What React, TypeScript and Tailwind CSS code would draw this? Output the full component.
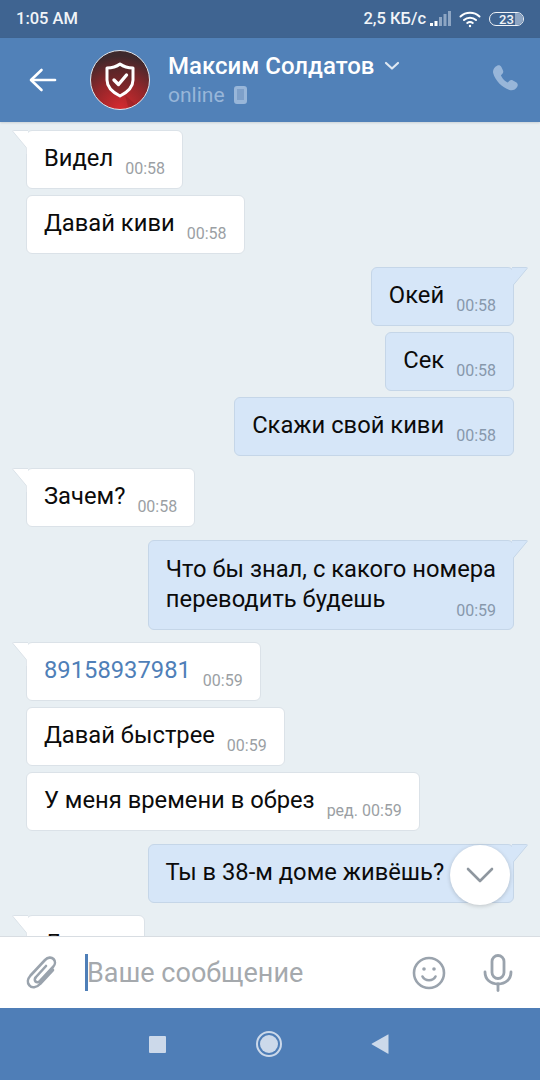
import React from 'react';

interface Message {
  text: string[];
  time: string;
  out?: boolean;
  tail?: boolean;
  link?: boolean;
  groupStart?: boolean;
}

const MESSAGES: Message[] = [
  { text: ['Видел'], time: '00:58', tail: true },
  { text: ['Давай киви'], time: '00:58' },
  { text: ['Окей'], time: '00:58', out: true, tail: true, groupStart: true },
  { text: ['Сек'], time: '00:58', out: true },
  { text: ['Скажи свой киви'], time: '00:58', out: true },
  { text: ['Зачем?'], time: '00:58', tail: true, groupStart: true },
  { text: ['Что бы знал, с какого номера', 'переводить будешь'], time: '00:59', out: true, tail: true, groupStart: true },
  { text: ['89158937981'], time: '00:59', tail: true, link: true, groupStart: true },
  { text: ['Давай быстрее'], time: '00:59' },
  { text: ['У меня времени в обрез'], time: 'ред. 00:59' },
  { text: ['Ты в 38-м доме живёшь?'], time: '00:59', out: true, tail: true, groupStart: true },
  { text: ['Да'], time: '00:59', tail: true, groupStart: true },
];

const Bubble: React.FC<{ message: Message }> = ({ message }) => {
  const { text, time, out, tail, link, groupStart } = message;
  const multiline = text.length > 1;

  return (
    <div className={`flex shrink-0 ${out ? 'justify-end pr-[26px]' : 'justify-start pl-[26px]'} ${groupStart ? 'mt-[12.5px]' : 'mt-[6px]'}`}>
      <div
        className={`relative flex min-h-[59px] rounded-[6px] border pl-[17px] pr-[17px] ${
          out ? 'border-[#c5d6e8] bg-[#d6e6f8]' : 'border-[#dbe2e8] bg-white'
        } ${multiline ? 'flex-col pt-[13px]' : 'items-start gap-[12px] pt-[12px]'}`}
      >
        {tail && !out && (
          <svg className="absolute left-[-15px] top-[-1px]" width="16" height="24" viewBox="0 0 16 24">
            <path d="M16 0.5H1.5Q0.2 0.5 1 1.6L15.5 19V24H16Z" fill="#ffffff" stroke="#dbe2e8" strokeWidth="1" />
            <rect x="14.8" y="1" width="2" height="23" fill="#ffffff" />
          </svg>
        )}
        {tail && out && (
          <svg className="absolute right-[-15px] top-[-1px]" width="16" height="24" viewBox="0 0 16 24">
            <path d="M0 0.5H14.5Q15.8 0.5 15 1.6L0.5 19V24H0Z" fill="#d6e6f8" stroke="#c5d6e8" strokeWidth="1" />
            <rect x="-1" y="1" width="2" height="23" fill="#d6e6f8" />
          </svg>
        )}
        <div className={`text-[23.75px] leading-[30px] ${link ? 'text-[#4f7fb8]' : 'text-[#0b0b0b]'}`}>
          {text.map((line) => (
            <div key={line} className="whitespace-nowrap">{line}</div>
          ))}
        </div>
        <div
          className={`whitespace-nowrap text-[16px] leading-[20px] ${out ? 'text-[#8798ac]' : 'text-[#9b9fa4]'} ${
            multiline ? 'self-end -mt-[13px] mb-[8px]' : 'mt-[16px]'
          }`}
        >
          {time}
        </div>
      </div>
    </div>
  );
};

export default function App() {
  return (
    <div className="flex h-[1080px] w-[540px] flex-col overflow-hidden bg-[#e8eff3] font-['Roboto',sans-serif]">
      {/* Status bar */}
      <div className="flex h-[38px] shrink-0 items-center bg-[#3f6491] pl-[16px] pr-[16px] text-[16.5px] font-medium text-[#f1f4f8]">
        <span>1:05 AM</span>
        <span className="ml-auto">2,5 КБ/с</span>
        <svg className="ml-[4px]" width="21" height="18" viewBox="0 0 21 18">
          <rect x="0" y="13" width="3" height="3" fill="#ffffff" />
          <rect x="4.5" y="11" width="3" height="5" fill="#ffffff" />
          <rect x="9" y="7" width="3" height="9" fill="#8ea6c4" />
          <rect x="13.5" y="4" width="3" height="12" fill="#8ea6c4" />
          <rect x="18" y="1" width="3" height="15" fill="#8ea6c4" />
        </svg>
        <svg className="ml-[8px]" width="22" height="18" viewBox="0 0 22 18" fill="none" stroke="#ffffff" strokeWidth="2" strokeLinecap="round">
          <path d="M1.5 6.5C6.8 1.5 15.2 1.5 20.5 6.5" />
          <path d="M5 10C8.3 7 13.7 7 17 10" />
          <path d="M8.2 13C9.8 11.8 12.2 11.8 13.8 13" />
          <circle cx="11" cy="16" r="1.2" fill="#ffffff" stroke="none" />
        </svg>
        <div className="relative ml-[8px] flex h-[14px] w-[35px] items-center justify-center overflow-hidden rounded-[8px] border border-[#f1f4f8] text-[13px] leading-none">
          <div className="absolute bottom-0 right-0 top-0 w-[8px] bg-[#8ea6c4]" />
          <span className="relative">23</span>
        </div>
      </div>

      {/* Header */}
      <div className="flex h-[84px] shrink-0 items-center bg-[#5181b8] shadow-[0_1px_2px_rgba(0,0,0,0.12)]">
        <svg className="ml-[29px]" width="28" height="24" viewBox="0 0 28 24" fill="none" stroke="#ffffff" strokeWidth="2.6" strokeLinecap="round" strokeLinejoin="round">
          <path d="M12.5 2L2 12L12.5 22" />
          <path d="M2.5 12H26" />
        </svg>
        <div className="ml-[33px] h-[60px] w-[60px] shrink-0 overflow-hidden rounded-full border-[1.5px] border-[#dfe3e8] bg-[radial-gradient(circle_at_50%_100%,#d62b2f_0%,#96262a_42%,#3e292c_82%)]">
          <svg width="57" height="57" viewBox="0 0 57 57">
            <path d="M34 44L52 60H38Z" fill="#000000" fillOpacity="0.1" />
            <path d="M29 13C33 16 37 17 42 17V29C42 37 36 41.5 29 45C22 41.5 16 37 16 29V17C21 17 25 16 29 13Z" fill="#3a2426" fillOpacity="0.35" stroke="#ffffff" strokeWidth="3" strokeLinejoin="round" />
            <path d="M23 29L27.5 33.5L35.5 24" fill="none" stroke="#ffffff" strokeWidth="3.4" strokeLinecap="round" strokeLinejoin="round" />
          </svg>
        </div>
        <div className="ml-[18px] flex flex-col">
          <div className="flex items-center text-[24px] font-medium leading-[28px] text-white">
            <span>Максим Солдатов</span>
            <svg className="ml-[10px]" width="16" height="10" viewBox="0 0 16 10" fill="none" stroke="#dfe8f2" strokeWidth="2.2" strokeLinecap="round" strokeLinejoin="round">
              <path d="M2 2L8 7.5L14 2" />
            </svg>
          </div>
          <div className="mt-[2px] flex items-center text-[21px] leading-[26px] text-[#98b6d9]">
            <span>online</span>
            <div className="ml-[9px] h-[18px] w-[13px] rounded-[3px] border-[3px] border-b-[4px] border-[#98b6d9] bg-[#7ea0c9]" />
          </div>
        </div>
        <svg className="mb-[4px] ml-auto mr-[21px]" width="28" height="28" viewBox="0 0 24 24" fill="#98b6d9">
          <path d="M5.2 1.4C6.7 0.6 8.2 1.2 8.9 2.6L10.2 5.3C10.8 6.5 10.5 7.7 9.6 8.6L8.5 9.6C9.3 11.9 11.9 14.8 14.4 15.8L15.6 14.6C16.5 13.7 17.7 13.5 18.8 14.1L21.5 15.6C22.9 16.4 23.4 18 22.5 19.4C21 21.9 18.5 23 15.8 22.2C9.5 20.4 3.6 14.2 1.9 8C1.2 5.2 2.7 2.7 5.2 1.4Z" />
        </svg>
      </div>

      {/* Messages */}
      <div className="relative flex min-h-0 flex-1 flex-col overflow-hidden pt-[2px]">
        {MESSAGES.map((message, i) => (
          <Bubble key={i} message={message} />
        ))}
        <button className="absolute left-[450px] top-[723px] flex h-[60px] w-[60px] items-center justify-center rounded-full bg-white shadow-[0_1px_4px_rgba(0,0,0,0.18)]">
          <svg width="28" height="16" viewBox="0 0 28 16" fill="none" stroke="#8f979f" strokeWidth="2.6" strokeLinecap="round" strokeLinejoin="round">
            <path d="M2 2L14 14L26 2" />
          </svg>
        </button>
      </div>

      {/* Composer */}
      <div className="relative flex h-[72px] shrink-0 items-center border-t border-[#d8dde2] bg-white">
        <svg className="ml-[26px]" width="32" height="36" viewBox="0 0 32 36" fill="none" stroke="#9aa3ad" strokeWidth="2.6" strokeLinecap="round" strokeLinejoin="round">
          <path d="M27 15L14 29C10.5 33 5.5 33 3.5 30.5C1 28 1.5 24 4.5 20.5L19 5C22 2 25.5 2 27.5 4C29.5 6 29.5 9.5 27 12L14 26C12.5 27.5 10.5 27.5 9.5 26.5C8.5 25.5 8.5 23.5 10 22L20 11" />
        </svg>
        <div className="ml-[27px] h-[37px] w-[3px] bg-[#4f7fb8]" />
        <span className="-ml-[1px] mt-[2px] text-[27px] text-[#a5a9ad]">Ваше сообщение</span>
        <svg className="ml-auto" width="34" height="34" viewBox="0 0 34 34" fill="none" stroke="#9aa3ad" strokeWidth="2.6" strokeLinecap="round">
          <circle cx="17" cy="17" r="15" />
          <path d="M10.5 20.5C13 25.5 21 25.5 23.5 20.5" />
          <circle cx="12" cy="13" r="1.8" fill="#9aa3ad" stroke="none" />
          <circle cx="22" cy="13" r="1.8" fill="#9aa3ad" stroke="none" />
        </svg>
        <svg className="ml-[37px] mr-[27px]" width="30" height="38" viewBox="0 0 30 38" fill="none" stroke="#9aa3ad" strokeWidth="2.8" strokeLinecap="round">
          <rect x="9" y="1.5" width="12" height="23" rx="6" />
          <path d="M2 18C2 25.5 7.5 30 15 30C22.5 30 28 25.5 28 18" />
          <path d="M15 30V36.5" />
        </svg>
      </div>

      {/* Navigation bar */}
      <div className="flex h-[72px] shrink-0 items-center bg-[#4f7eb7] pl-[149px]">
        <div className="h-[17px] w-[17px] rounded-[1px] bg-[#ccd9ea]" />
        <div className="ml-[90px] flex h-[26px] w-[26px] items-center justify-center rounded-full border-2 border-[#ccd9ea]">
          <div className="h-[18px] w-[18px] rounded-full bg-[#ccd9ea]" />
        </div>
        <svg className="ml-[89px]" width="18" height="20" viewBox="0 0 18 20">
          <path d="M17.5 1V19.5Q17.5 20 17 19.7L1 10.6Q0 10 1 9.4L17 0.4Q17.5 0.2 17.5 1Z" fill="#ccd9ea" />
        </svg>
      </div>
    </div>
  );
}
